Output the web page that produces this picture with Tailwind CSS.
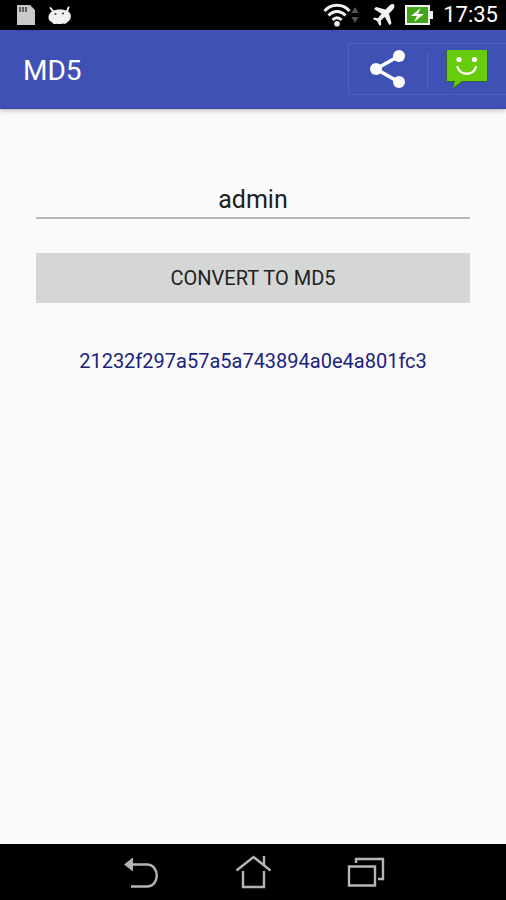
<!DOCTYPE html>
<html lang="en">
<head>
<meta charset="utf-8">
<meta name="viewport" content="width=device-width, initial-scale=1">
<title>MD5</title>
<script src="https://cdn.jsdelivr.net/npm/@tailwindcss/browser@4"></script>
</head>
<body class="flex min-h-screen flex-col bg-[#fafafa] font-[Roboto,sans-serif]">
  <!-- Status bar -->
  <div class="flex h-[30px] items-center justify-between bg-black pr-2 pl-4 text-white">
    <div class="flex items-center gap-3">
      <svg class="h-[22px] w-5" viewBox="0 0 20 22" aria-hidden="true">
        <path d="M1 1h13l5 5v15H1z" fill="#c9c9c9"/>
        <path d="M4 3v5M7 3v5M10 3v5" stroke="#555" stroke-width="1.8"/>
      </svg>
      <svg class="h-[22px] w-6" viewBox="0 0 24 22" aria-hidden="true">
        <path d="M2.500 4l4 5M20.500 3.500l-2 5" stroke="#f2f2f2" stroke-width="2" stroke-linecap="round"/>
        <path d="M.5 13.500C.5 8 6 5.500 12 5.500S23.500 7.500 22.800 13c-.3 3-2 4-3.300 5-1.500 2-3 2-4.500 1.500-2 .7-4 .7-6 .2-2 .8-4 .3-5-1.500-2.500-1.200-3.500-2.700-3.500-4.700z" fill="#f2f2f2"/>
        <circle cx="7.500" cy="10" r="1.100" fill="#444"/><circle cx="15" cy="9.500" r="1.100" fill="#444"/>
      </svg>
    </div>
    <div class="flex items-center gap-2.5">
      <div class="flex items-center pr-1">
        <svg class="h-6 w-7" viewBox="0 0 28 24" fill="none" stroke="#f2f2f2" stroke-width="3" aria-hidden="true">
          <path d="M1.500 8C8 .3 20 .3 26.500 8M5.500 12.500c5-5.500 12-5.500 17 0M9.500 17c3-3 6-3 9 0"/>
          <circle cx="14" cy="20.800" r="2.800" fill="#f2f2f2" stroke="none"/>
        </svg>
        <svg class="h-5 w-2" viewBox="0 0 8 20" fill="#555" aria-hidden="true"><path d="M4 2l3.500 6h-7zM4 18l3.500-6h-7z"/></svg>
      </div>
      <svg class="h-6 w-[22px]" viewBox="0 0 22 24" fill="#f2f2f2" aria-hidden="true">
        <path d="M21 1.500c-1.500-1-3.500 0-5 1.500l-3.500 3.500L3 4 1 6l7.500 4.700L5 15.200l-3.700-.7L0 16l4.300 2.300L6.700 23l1.600-1.500-.5-4 4-3.600 4.700 8.400 2-2-2.500-9.900 3.600-3.500c1.500-1.500 2.400-3.900 1.400-5.400z"/>
      </svg>
      <svg class="h-5 w-7" viewBox="0 0 28 20" aria-hidden="true">
        <path d="M25 6h3v8h-3z" fill="#f2f2f2"/>
        <path d="M1 1h23v18H1z" fill="#43a518" stroke="#f2f2f2" stroke-width="2"/>
        <path d="M15.500 3L6 11h6l-3 6 10-8h-6z" fill="#fff"/>
      </svg>
      <span class="text-[22px] leading-7">17:35</span>
    </div>
  </div>

  <!-- App bar -->
  <header class="flex h-[79px] items-center justify-between border-b border-[#33449a] bg-[#3f51b5] pl-[23px] shadow-[0_1px_5px_rgba(0,0,0,0.3)]">
    <h1 class="pt-1 text-[28px] leading-8 text-white">MD5</h1>
    <div class="flex h-[52px] items-center border border-r-0 border-[#4f60bd]">
      <button type="button" aria-label="Share" class="flex h-full w-[78px] items-center justify-center">
        <svg class="h-10 w-10" viewBox="0 0 40 40" fill="#fff" aria-hidden="true">
          <path d="M31 7L8 20l23 13" fill="none" stroke="#fff" stroke-width="3.600"/>
          <circle cx="31" cy="7" r="6"/><circle cx="8" cy="20" r="6"/><circle cx="31" cy="33" r="6"/>
        </svg>
      </button>
      <span class="h-9 w-px bg-[#5364c0]"></span>
      <button type="button" aria-label="Send message" class="flex h-full w-[78px] items-center justify-center">
        <svg class="h-[42px] w-[42px]" viewBox="0 0 42 42" aria-hidden="true">
          <path d="M0 2h42v32H17L6 42l2-8H0z" fill="#32633b"/>
          <path d="M1 2h40v31H16L7 40l2-7H1z" fill="#66cc0c"/>
          <circle cx="13" cy="11.500" r="2.600" fill="#fff"/><circle cx="28.500" cy="11.500" r="2.600" fill="#fff"/>
          <path d="M11.500 19c3 9 15.500 9 18.500 0" fill="none" stroke="#fff" stroke-width="2.300" stroke-linecap="round"/>
        </svg>
      </button>
    </div>
  </header>

  <main class="flex flex-1 flex-col px-9 pt-[72px]">
    <input type="text" value="admin" aria-label="Text to convert" class="h-[38px] w-full border-b-2 border-[#b8b8b8] bg-transparent text-center text-[25px] leading-8 text-[#212121] outline-none">
    <button type="button" class="mt-[34px] h-[50px] w-full bg-[#d5d7d6] text-center text-[20px] leading-6 text-[#212121]">CONVERT TO MD5</button>
    <output class="mt-[46px] block text-center text-[20px] leading-6 text-[#1a237e]">21232f297a57a5a743894a0e4a801fc3</output>
  </main>

  <!-- System navigation -->
  <nav aria-label="System" class="flex h-14 items-center justify-center gap-[72px] bg-black">
    <button type="button" aria-label="Back">
      <svg class="h-10 w-10" viewBox="0 0 40 40" fill="none" stroke="#b5b5b5" stroke-width="2.400" aria-hidden="true">
        <path d="M11 12.500h15c13 0 13 22 0 22H10"/><path d="M3 12.500l9-7v14z" fill="#b5b5b5" stroke="none"/>
      </svg>
    </button>
    <button type="button" aria-label="Home">
      <svg class="h-10 w-10" viewBox="0 0 40 40" fill="none" stroke="#b5b5b5" stroke-width="2.400" aria-hidden="true">
        <path d="M3.500 18.500L20.500 5l17 13.500M10 19v16h21V19M31 13V4"/>
      </svg>
    </button>
    <button type="button" aria-label="Recent apps">
      <svg class="h-10 w-10" viewBox="0 0 40 40" fill="none" stroke="#b5b5b5" stroke-width="2.400" aria-hidden="true">
        <path d="M4 14.500h26V33.500H4zM11 11V7h27v20h-5"/>
      </svg>
    </button>
  </nav>
</body>
</html>
